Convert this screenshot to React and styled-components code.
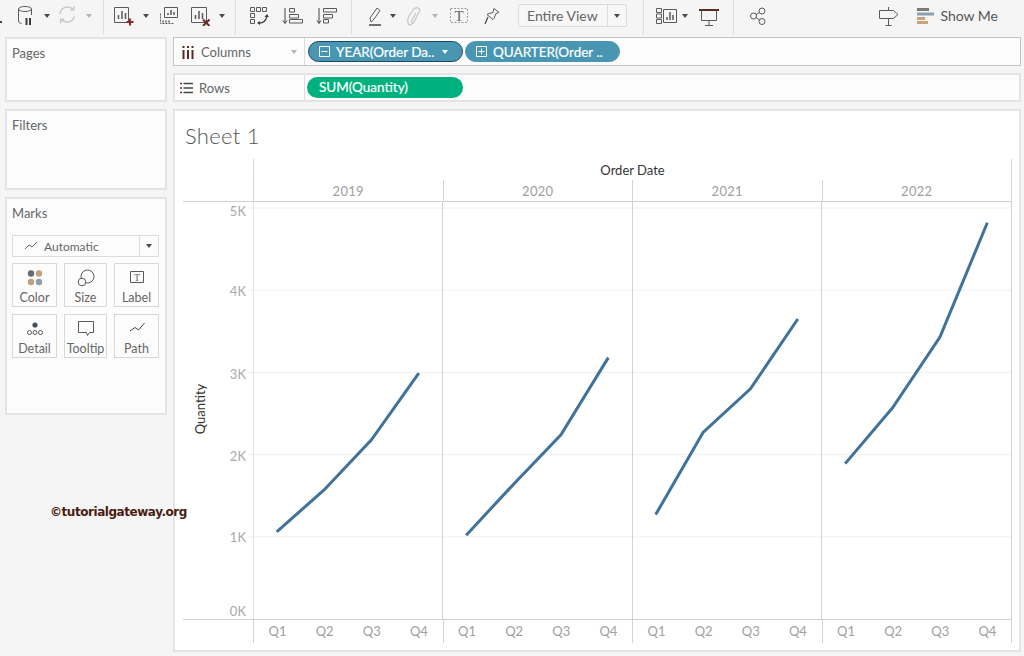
import styled, { createGlobalStyle } from "styled-components";

const GlobalStyle = createGlobalStyle`
  html, body { margin: 0; padding: 0; background: #f5f5f5; }
  * { box-sizing: border-box; }
`;

const SERIES = [
  { year: "2019", values: [1.06, 1.57, 2.18, 2.99] },
  { year: "2020", values: [1.02, 1.64, 2.24, 3.18] },
  { year: "2021", values: [1.27, 2.27, 2.8, 3.65] },
  { year: "2022", values: [1.89, 2.57, 3.43, 4.82] },
];

const AXIS_W = 70;
const PANE_W = 189.5;
const PLOT_H = 417;
const PER_K = 82.2;

const yFor = (k) => PLOT_H - k * PER_K;

const Plot = () => (
  <PlotSvg width="829" height={PLOT_H} viewBox={`0 0 829 ${PLOT_H}`}>
    {[1, 2, 3, 4, 5].map((k) => (
      <line key={k} x1={AXIS_W - 5} x2="828" y1={yFor(k)} y2={yFor(k)} stroke="#f0f0f0" />
    ))}
    {[0, 1, 2, 3, 4].map((i) => (
      <line
        key={i}
        x1={Math.floor(AXIS_W + i * PANE_W) + 0.5}
        x2={Math.floor(AXIS_W + i * PANE_W) + 0.5}
        y1="0"
        y2={PLOT_H}
        stroke={i === 0 ? "#e2e2e2" : "#d2d2d2"}
      />
    ))}
    {[
      ["5K", 11],
      ["4K", yFor(4) + 3],
      ["3K", yFor(3) + 3],
      ["2K", yFor(2) + 3],
      ["1K", yFor(1) + 2],
      ["0K", 411],
    ].map(([label, y]) => (
      <AxisLabel key={label} x="63" y={y} textAnchor="end" dominantBaseline="middle">
        {label}
      </AxisLabel>
    ))}
    <AxisTitle x="19" y="207" textAnchor="middle" transform="rotate(-90 19 207)" dominantBaseline="middle">
      Quantity
    </AxisTitle>
    {SERIES.map((s, i) => (
      <polyline
        key={s.year}
        fill="none"
        stroke="#40729a"
        strokeWidth="3"
        points={s.values
          .map((v, q) => `${AXIS_W + i * PANE_W + PANE_W * ((q + 0.5) / 4)},${yFor(v)}`)
          .join(" ")}
      />
    ))}
  </PlotSvg>
);

const Caret = ({ off, w = 16 }) => (
  <CaretSlot $w={w}>
    <CaretMark $off={off} />
  </CaretSlot>
);

const Svg = ({ children, w = 24, h = 24 }) => (
  <svg width={w} height={h} viewBox={`0 0 ${w} ${h}`} fill="none" stroke="#5a5a5a" strokeWidth="1">
    {children}
  </svg>
);

const DatabaseIcon = () => (
  <Svg>
    <ellipse cx="11" cy="7" rx="6.5" ry="2.5" />
    <path d="M4.5 7v12q0 2 3 2.5M17.5 7v6" />
    <path d="M12.5 16v7M16 16v7" stroke="#3c3c3c" strokeWidth="2" />
  </Svg>
);

const RefreshIcon = () => (
  <Svg>
    <g stroke="#c4c4c4" strokeWidth="1.4">
      <path d="M4.5 12a8 8 0 0 1 14-5M20 14a8 8 0 0 1-14 4" />
      <path d="M19.5 3.5v4h-4M5 22v-4h4" />
    </g>
  </Svg>
);

const NewSheetIcon = () => (
  <Svg>
    <path d="M3.5 5.5h14v15h-14z" />
    <path d="M7.5 17v-4M11 17V9M14.5 17v-6" strokeWidth="1.5" />
    <path d="M19 16.5v7M15.5 20h7" stroke="#8a2a1c" strokeWidth="2" />
  </Svg>
);

const DuplicateIcon = () => (
  <Svg>
    <path d="M7.5 5.5h13v10h-13z" />
    <path d="M11 13v-2M14 13V8M17 13v-3" strokeWidth="1.5" />
    <path d="M3.5 11.5v10h13" strokeDasharray="2 1" />
    <path d="M6 18.5v2M9 18.5v2M12 18.5v2" strokeWidth="1.4" />
  </Svg>
);

const ClearIcon = () => (
  <Svg>
    <path d="M3.5 5.5h15v15h-15z" />
    <path d="M7.5 17v-4M11 17V9M14.5 17v-6" strokeWidth="1.5" />
    <path d="M15 17.5l6.5 6.5M21.5 17.5l-6.5 6.5" stroke="#6e2a20" strokeWidth="2" />
  </Svg>
);

const SwapIcon = () => (
  <Svg>
    <path d="M3.5 5.5h4v4h-4zM9.5 5.5h4v4h-4zM15.5 5.5h4v4h-4zM3.5 11.5h4v4h-4zM3.5 17.5h4v4h-4z" />
    <path d="M11 21q7 1 9-7" stroke="#3c3c3c" strokeWidth="1.2" />
    <path d="M17.5 15l2.5-3 2 3M13 19l-3 2 3 2" fill="#3c3c3c" stroke="none" />
  </Svg>
);

const SortAscIcon = () => (
  <Svg>
    <path d="M5 6v15M3 18.5l2 3 2-3" stroke="#444" />
    <path d="M9.5 6.5h5v3.5h-5zM9.5 12.5h9v3.5h-9zM9.5 17.5h13v3.5h-13z" />
  </Svg>
);

const SortDescIcon = () => (
  <Svg>
    <path d="M5 6v15M3 18.5l2 3 2-3" stroke="#444" />
    <path d="M9.5 6.5h13v3.5h-13zM9.5 12.5h9v3.5h-9zM9.5 17.5h5v3.5h-5z" />
  </Svg>
);

const HighlightIcon = () => (
  <Svg>
    <path d="M9 20l-1-4 7-10 3 2.5-7 10z" />
    <path d="M7 23h12" stroke="#444" strokeWidth="1.5" />
  </Svg>
);

const ClipIcon = () => (
  <Svg>
    <path
      d="M8 22q-3 2-4-1t1-7l4-6q2-3 5-2t1 4l-5 10q-1 2-2 1t0-3l4-7"
      stroke="#c8c8c8"
      strokeWidth="1.3"
    />
  </Svg>
);

const TextBoxIcon = () => (
  <Svg>
    <path d="M3.5 6.5h17v14h-17z" stroke="#9a9a9a" strokeDasharray="2 1.5" />
    <TextGlyph x="12" y="18.5" textAnchor="middle">T</TextGlyph>
  </Svg>
);

const PinIcon = () => (
  <Svg>
    <path d="M14 6.5l5 4-3 1-2 5-1 1-6-5 2-1 4-1z" strokeLinejoin="round" />
    <path d="M8 15l-3 7" stroke="#444" strokeWidth="1.2" />
  </Svg>
);

const CardsIcon = () => (
  <Svg>
    <path d="M1.5 6.5h5v4h-5zM1.5 12h5v4h-5zM1.5 17.5h5v4h-5zM8.5 7.5h13v13h-13z" />
    <path d="M12 18v-3M15 18V10M18 18v-5" strokeWidth="1.5" />
  </Svg>
);

const PresentIcon = () => (
  <Svg>
    <path d="M2 8h20" stroke="#5a2a22" strokeWidth="2" />
    <path d="M4.5 8v10.5h15V8M12 19v4M8 23.5h8" />
  </Svg>
);

const ShareIcon = () => (
  <Svg>
    <circle cx="16" cy="9" r="3" />
    <circle cx="7.5" cy="14" r="3" />
    <circle cx="16" cy="19.5" r="3" />
    <path d="M13.5 10.5l-3.5 2M10 15.5l3.5 2.5" />
  </Svg>
);

const SignIcon = () => (
  <Svg>
    <path d="M2.5 8.5h14l4.5 4-4.5 4h-14zM11.5 5v3M11.5 17v6M8.5 23.5h6" />
  </Svg>
);

const ShowMeIcon = () => (
  <Svg w={18} h={24}>
    <path d="M1 7.5h12" stroke="#7a7a7a" strokeWidth="3" />
    <path d="M1 12h17" stroke="#8aa0b0" strokeWidth="3" />
    <path d="M1 16.5h8" stroke="#c9a27c" strokeWidth="3" />
    <path d="M1 20.5h11" stroke="#c9a27c" strokeWidth="3" />
  </Svg>
);

const ColumnsIcon = () => (
  <Svg w={14} h={16}>
    <path d="M2.5 6v9M7 6v9M11.5 6v9" stroke="#5a2a22" strokeWidth="2" />
    <path d="M2.5 2v2M7 2v2M11.5 2v2" stroke="#5a2a22" strokeWidth="2" />
  </Svg>
);

const RowsIcon = () => (
  <Svg w={13} h={14}>
    <path d="M3.5 2.5h10M3.5 7h10M3.5 11.5h10" stroke="#444" strokeWidth="1.5" />
    <path d="M0 2.5h2M0 7h2M0 11.5h2" stroke="#6e2a20" strokeWidth="1.5" />
  </Svg>
);

const PillToggle = ({ minus }) => (
  <svg width="11" height="11" viewBox="0 0 11 11" fill="none" stroke="#fff">
    <path d="M.5.5h10v10H.5zM2.5 5.5h6" />
    {!minus && <path d="M5.5 2.5v6" />}
  </svg>
);

const LineMark = () => (
  <Svg w={14} h={10}>
    <path d="M1 8l4-4 3 2 5-5" stroke="#666" />
  </Svg>
);

const ColorIcon = () => (
  <Svg w={18} h={18}>
    <circle cx="5" cy="4.5" r="3.2" fill="#6a6a6a" stroke="none" />
    <circle cx="13" cy="4.5" r="3.2" fill="#c29f7e" stroke="none" />
    <circle cx="5" cy="13" r="3.2" fill="#c29f7e" stroke="none" />
    <circle cx="13" cy="13" r="3.2" fill="#8e9dad" stroke="none" />
  </Svg>
);

const SizeIcon = () => (
  <Svg w={18} h={18}>
    <circle cx="10.5" cy="7.5" r="6.5" />
    <circle cx="5" cy="13" r="3.8" fill="#fcfcfc" />
  </Svg>
);

const LabelIcon = () => (
  <Svg w={18} h={18}>
    <path d="M2.5 2.5h13v11h-13z" />
    <TextGlyph x="9" y="12" textAnchor="middle" $small>T</TextGlyph>
  </Svg>
);

const DetailIcon = () => (
  <Svg w={18} h={18}>
    <circle cx="9" cy="5" r="2.6" fill="#44505c" stroke="none" />
    <circle cx="3.5" cy="12.5" r="2" />
    <circle cx="9" cy="12.5" r="2" />
    <circle cx="14.5" cy="12.5" r="2" />
  </Svg>
);

const TooltipIcon = () => (
  <Svg w={18} h={18}>
    <path d="M1.5 1.5h15v11h-4l-2 3-1-3h-8z" />
  </Svg>
);

const PathIcon = () => (
  <Svg w={18} h={18}>
    <path d="M2 11l5-3.5 3.5 2.5 6-7" stroke="#444" />
  </Svg>
);

const MARKS = [
  { label: "Color", Icon: ColorIcon },
  { label: "Size", Icon: SizeIcon },
  { label: "Label", Icon: LabelIcon },
  { label: "Detail", Icon: DetailIcon },
  { label: "Tooltip", Icon: TooltipIcon },
  { label: "Path", Icon: PathIcon },
];

const App = () => {
  return (
    <Page>
      <GlobalStyle />
      <Toolbar>
        <ToolGroup>
          <Tool $w={14}><StubDot /></Tool>
          <Tool $w={24}><DatabaseIcon /></Tool>
          <Caret w={18} />
          <Tool $w={22}><RefreshIcon /></Tool>
          <Caret off w={22} />
        </ToolGroup>
        <ToolGroup $w={132} $pad={4}>
          <Tool $w={30}><NewSheetIcon /></Tool>
          <Caret />
          <Tool $w={30}><DuplicateIcon /></Tool>
          <Tool $w={32}><ClearIcon /></Tool>
          <Caret w={12} />
        </ToolGroup>
        <ToolGroup $w={116} $pad={8}>
          <Tool $w={30}><SwapIcon /></Tool>
          <Tool $w={36}><SortAscIcon /></Tool>
          <Tool $w={32}><SortDescIcon /></Tool>
        </ToolGroup>
        <ToolGroup $w={292} $pad={10}>
          <Tool $w={24}><HighlightIcon /></Tool>
          <Caret w={14} />
          <Tool $w={32}><ClipIcon /></Tool>
          <Caret off w={6} />
          <Tool $w={42}><TextBoxIcon /></Tool>
          <Tool $w={24}><PinIcon /></Tool>
          <FitSelect>
            <FitValue>Entire View</FitValue>
            <FitArrow><CaretMark /></FitArrow>
          </FitSelect>
        </ToolGroup>
        <ToolGroup $w={90} $pad={10}>
          <Tool $w={26}><CardsIcon /></Tool>
          <Caret w={10} />
          <Tool $w={38}><PresentIcon /></Tool>
        </ToolGroup>
        <ToolGroup $w={100} $pad={10} $plain>
          <Tool $w={28}><ShareIcon /></Tool>
        </ToolGroup>
        <ToolRight>
          <SignIcon />
          <ShowMe>
            <ShowMeIcon />
            <span>Show Me</span>
          </ShowMe>
        </ToolRight>
      </Toolbar>

      <Body>
        <Sidebar>
          <Card $h={65}>
            <CardTitle>Pages</CardTitle>
          </Card>
          <Card $h={81}>
            <CardTitle>Filters</CardTitle>
          </Card>
          <Card $h={218}>
            <CardTitle>Marks</CardTitle>
            <MarkSelect>
              <MarkValue>
                <LineMark />
                Automatic
              </MarkValue>
              <MarkArrow><CaretMark /></MarkArrow>
            </MarkSelect>
            <MarkGrid>
              {MARKS.map(({ label, Icon }) => (
                <MarkButton key={label}>
                  <Icon />
                  <span>{label}</span>
                </MarkButton>
              ))}
            </MarkGrid>
          </Card>
        </Sidebar>

        <Main>
          <Shelf $dark>
            <ShelfLabel $w={131} $pad={7}>
              <ColumnsIcon />
              <span>Columns</span>
              <ShelfCaret><CaretMark $off /></ShelfCaret>
            </ShelfLabel>
            <ShelfBody>
              <Pill $selected>
                <PillToggle minus />
                <span>YEAR(Order Da..</span>
                <CaretMark $white />
              </Pill>
              <Pill>
                <PillToggle />
                <span>QUARTER(Order ..</span>
              </Pill>
            </ShelfBody>
          </Shelf>
          <Shelf>
            <ShelfLabel $w={130} $pad={5}>
              <RowsIcon />
              <span>Rows</span>
            </ShelfLabel>
            <ShelfBody>
              <GreenPill>SUM(Quantity)</GreenPill>
            </ShelfBody>
          </Shelf>

          <Sheet>
            <SheetTitle>Sheet 1</SheetTitle>
            <Chart>
              <ColumnTitle>Order Date</ColumnTitle>
              <YearRow>
                {SERIES.map((s) => (
                  <YearCell key={s.year}>{s.year}</YearCell>
                ))}
              </YearRow>
              <Plot />
              <QuarterRow>
                {SERIES.map((s) => (
                  <QuarterPane key={s.year}>
                    {["Q1", "Q2", "Q3", "Q4"].map((q) => (
                      <QuarterCell key={q}>{q}</QuarterCell>
                    ))}
                  </QuarterPane>
                ))}
              </QuarterRow>
            </Chart>
          </Sheet>
        </Main>
      </Body>

      <Watermark>©tutorialgateway.org</Watermark>
    </Page>
  );
};

const Page = styled.div`
  position: relative;
  width: 1024px;
  height: 656px;
  overflow: hidden;
  background: #f5f5f5;
  font-family: "Lato", "Liberation Sans", sans-serif;
  color: #555;
`;

const Toolbar = styled.div`
  display: flex;
  height: 37px;
  padding-bottom: 2px;
`;

const ToolGroup = styled.div`
  display: flex;
  align-items: center;
  width: ${(p) => p.$w || 104}px;
  padding-left: ${(p) => p.$pad || 0}px;
  padding-bottom: 7px;
  border-right: ${(p) => (p.$plain ? "none" : "1px solid #dedede")};
`;

const Tool = styled.div`
  display: flex;
  justify-content: center;
  align-items: center;
  flex: none;
  width: ${(p) => p.$w}px;
`;

const StubDot = styled.i`
  display: block;
  width: 2px;
  height: 2px;
  margin: 16px 12px 0 0;
  background: #444;
`;

const CaretSlot = styled.div`
  display: flex;
  justify-content: center;
  flex: none;
  width: ${(p) => p.$w}px;
  margin-top: 4px;
`;

const CaretMark = styled.i`
  display: block;
  flex: none;
  width: 0;
  height: 0;
  border-left: 3.5px solid transparent;
  border-right: 3.5px solid transparent;
  border-top: 4px solid ${(p) => (p.$white ? "#fff" : p.$off ? "#b5b5b5" : "#4a4a4a")};
`;

const FitSelect = styled.div`
  display: flex;
  flex: none;
  width: 109px;
  height: 23px;
  margin: 3px 0 0 14px;
  border: 1px solid #dcdcdc;
  border-radius: 2px;
  background: #f7f7f7;
  font-size: 14px;
  color: #666;
`;

const FitValue = styled.div`
  flex: 1;
  padding-left: 8px;
  line-height: 21px;
`;

const FitArrow = styled.div`
  display: flex;
  justify-content: center;
  align-items: center;
  width: 19px;
  border-left: 1px solid #dcdcdc;
`;

const ToolRight = styled.div`
  display: flex;
  align-items: center;
  justify-content: flex-end;
  gap: 15px;
  flex: 1;
  padding: 0 26px 7px 0;
`;

const ShowMe = styled.div`
  display: flex;
  align-items: center;
  gap: 6px;
  font-size: 14px;
  color: #555;

  & > span {
    padding-top: 2px;
  }
`;

const Body = styled.div`
  display: flex;
  gap: 6px;
  padding-left: 5px;
`;

const Sidebar = styled.div`
  display: flex;
  flex-direction: column;
  gap: 7px;
  width: 162px;
`;

const Card = styled.div`
  height: ${(p) => p.$h}px;
  padding: 6px 6px 6px 5px;
  border: 2px solid #e4e4e4;
  background: #fcfcfc;
`;

const CardTitle = styled.div`
  font-size: 13px;
  line-height: 16px;
  color: #666;
`;

const MarkSelect = styled.div`
  display: flex;
  height: 22px;
  margin-top: 14px;
  border: 1px solid #dcdcdc;
  font-size: 12px;
  color: #666;
`;

const MarkValue = styled.div`
  display: flex;
  align-items: center;
  gap: 6px;
  flex: 1;
  padding-left: 11px;
`;

const MarkArrow = styled.div`
  display: flex;
  justify-content: center;
  align-items: center;
  width: 19px;
  border-left: 1px solid #dcdcdc;
`;

const MarkGrid = styled.div`
  display: grid;
  grid-template-columns: 45px 43px 45px;
  grid-auto-rows: 44px;
  gap: 7px;
  margin-top: 6px;
`;

const MarkButton = styled.div`
  display: flex;
  flex-direction: column;
  align-items: center;
  padding-top: 5px;
  border: 1px solid #d8d8d8;
  font-size: 12.5px;
  line-height: 15px;
  color: #666;
  white-space: nowrap;

  & > span {
    margin-top: 3px;
  }
`;

const Main = styled.div`
  display: flex;
  flex-direction: column;
  gap: 7px;
  width: 848px;
`;

const Shelf = styled.div`
  display: flex;
  height: 29px;
  border: ${(p) => (p.$dark ? "1px solid #c4c4c4" : "2px solid #e4e4e4")};
  background: #fcfcfc;
`;

const ShelfLabel = styled.div`
  display: flex;
  align-items: center;
  gap: 6px;
  width: ${(p) => p.$w}px;
  padding-left: ${(p) => p.$pad}px;
  border-right: 1px solid #dcdcdc;
  font-size: 13px;
  color: #666;
`;

const ShelfCaret = styled.div`
  margin-left: auto;
  padding-right: 7px;
`;

const ShelfBody = styled.div`
  display: flex;
  align-items: center;
  gap: 2px;
  flex: 1;
  padding-left: 3px;
`;

const Pill = styled.div`
  display: flex;
  align-items: center;
  gap: 6px;
  width: 155px;
  height: 21px;
  padding-left: 10px;
  border: 1px solid ${(p) => (p.$selected ? "#1d4a60" : "#4996b2")};
  border-radius: 11px;
  background: #4996b2;
  color: #fff;
  font-size: 13.5px;
  -webkit-text-stroke: 0.2px #fff;
  white-space: nowrap;

  & > i {
    margin-left: 2px;
  }
`;

const GreenPill = styled.div`
  width: 156px;
  height: 21px;
  margin-left: -1px;
  padding-left: 12px;
  border-radius: 11px;
  background: #00b180;
  color: #fff;
  font-size: 13.5px;
  -webkit-text-stroke: 0.2px #fff;
  line-height: 21px;
`;

const Sheet = styled.div`
  flex: none;
  height: 543px;
  padding-left: 8px;
  border: 2px solid #e4e4e4;
  background: #fff;
`;

const SheetTitle = styled.div`
  height: 48px;
  padding: 11px 0 0 2px;
  font-size: 22px;
  font-weight: 300;
  letter-spacing: 0.3px;
  line-height: 28px;
  color: #555;
`;

const Chart = styled.div`
  width: 829px;
`;

const ColumnTitle = styled.div`
  height: 21px;
  margin-left: 70px;
  border-left: 1px solid #d8d8d8;
  border-right: 1px solid #d8d8d8;
  font-size: 13px;
  line-height: 23px;
  text-align: center;
  color: #333;
`;

const YearRow = styled.div`
  display: grid;
  grid-template-columns: repeat(4, 189.5px);
  height: 22px;
  padding-left: 70px;
  border-bottom: 1px solid #d0d0d0;
`;

const YearCell = styled.div`
  border-left: 1px solid #d4d4d4;
  font-size: 13px;
  line-height: 22px;
  text-align: center;
  color: #a0a0a0;
  letter-spacing: 0.3px;

  &:last-child {
    box-shadow: 1px 0 0 #d8d8d8;
  }
`;

const PlotSvg = styled.svg`
  display: block;
`;

const AxisLabel = styled.text`
  font-family: "Lato", "Liberation Sans", sans-serif;
  font-size: 13px;
  fill: #aaa;
`;

const AxisTitle = styled.text`
  font-family: "Lato", "Liberation Sans", sans-serif;
  font-size: 13px;
  fill: #333;
`;

const TextGlyph = styled.text`
  font-family: "Liberation Serif", serif;
  font-size: ${(p) => (p.$small ? 10 : 15)}px;
  fill: #666;
  stroke: none;
`;

const QuarterRow = styled.div`
  display: grid;
  grid-template-columns: repeat(4, 189.5px);
  height: 23px;
  padding-left: 70px;
  border-top: 1px solid #cfcfcf;
`;

const QuarterPane = styled.div`
  display: grid;
  grid-template-columns: repeat(4, 1fr);
  border-left: 1px solid #d4d4d4;

  &:last-child {
    box-shadow: 1px 0 0 #d4d4d4;
  }
`;

const QuarterCell = styled.div`
  font-size: 13px;
  line-height: 23px;
  text-align: center;
  color: #a0a0a0;
`;

const Watermark = styled.div`
  position: absolute;
  left: 50px;
  top: 503px;
  font-family: "DejaVu Sans", sans-serif;
  font-size: 12px;
  font-weight: 700;
  letter-spacing: -0.45px;
  line-height: 18px;
  color: #4a1c12;
`;

export default App;
